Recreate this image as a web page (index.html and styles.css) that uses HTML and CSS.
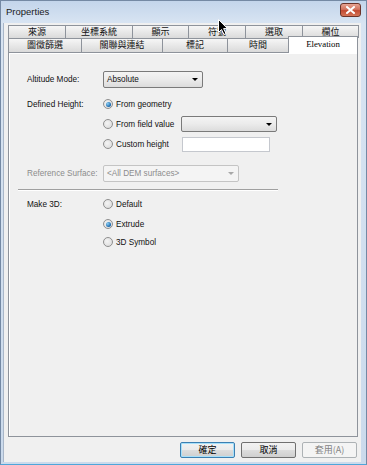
FILE: index.html
```html
<!DOCTYPE html>
<html lang="zh-Hant">
<head>
    <meta charset="UTF-8">
    <title>Properties</title>
    <link rel="stylesheet" href="styles.css">
</head>
<body>

<div class="window">
    <!-- Titelleiste -->
    <div class="titlebar">
        <span class="title">Properties</span>
        <span class="close">
            <svg width="9" height="8" viewBox="0 0 9 8"><path d="M1 1 L8 7 M8 1 L1 7" stroke="#fff" stroke-width="2" stroke-linecap="square"/></svg>
        </span>
    </div>

    <div class="client">
        <!-- Registerkarten -->
        <div class="tabrow back">
            <div class="tab w57">來源</div>
            <div class="tab w67">坐標系統</div>
            <div class="tab w56">顯示</div>
            <div class="tab w57">符號</div>
            <div class="tab w57">選取</div>
            <div class="tab w56">欄位</div>
        </div>
        <div class="tabrow front">
            <div class="tab w73">圖徵篩選</div>
            <div class="tab w81">關聯與連結</div>
            <div class="tab w65">標記</div>
            <div class="tab w61">時間</div>
            <div class="tab w70 active">Elevation</div>
        </div>

        <div class="panel">
            <div class="row r-alt">
                <span class="lbl">Altitude Mode:</span>
                <div class="combo c-alt">Absolute<span class="arrow"></span></div>
            </div>

            <div class="row r-opt first">
                <span class="lbl">Defined Height:</span>
                <span class="radio checked"></span>From geometry
            </div>
            <div class="row r-opt">
                <span class="lbl"></span>
                <span class="opt-w"><span class="radio"></span>From field value</span>
                <div class="combo c-field"><span class="arrow"></span></div>
            </div>
            <div class="row r-opt">
                <span class="lbl"></span>
                <span class="opt-w"><span class="radio"></span>Custom height</span>
                <div class="textbox"></div>
            </div>

            <div class="row r-ref disabled">
                <span class="lbl">Reference Surface:</span>
                <div class="combo c-ref">&lt;All DEM surfaces&gt;<span class="arrow"></span></div>
            </div>

            <div class="sep"></div>

            <div class="row r-opt r-3d">
                <span class="lbl">Make 3D:</span>
                <span class="radio"></span>Default
            </div>
            <div class="row r-opt">
                <span class="lbl"></span>
                <span class="radio checked"></span>Extrude
            </div>
            <div class="row r-opt last">
                <span class="lbl"></span>
                <span class="radio"></span>3D Symbol
            </div>
        </div>

        <!-- Schaltflächen -->
        <div class="buttons">
            <button class="btn default">確定</button>
            <button class="btn">取消</button>
            <button class="btn" disabled>套用(A)</button>
        </div>
    </div>

    <!-- Mauszeiger -->
    <svg class="cursor" width="11" height="17" viewBox="0 0 11 17">
        <path d="M0.5 0.5 L0.5 13.5 L3.5 10.5 L6 15.5 L8 14.5 L5.6 9.6 L9.5 9.6 Z" fill="#000" stroke="#fff" stroke-width="1"/>
    </svg>
</div>

</body>
</html>
```

FILE: styles.css
```css
/* Grundlayout */
body {
    margin: 0;
    font-family: 'Liberation Sans', Arial, sans-serif;
    font-size: 8.2px;
    color: #111;
}

.window {
    position: relative;
    width: 367px;
    height: 465px;
    box-sizing: border-box;
    display: flex;
    flex-direction: column;
    background: linear-gradient(#c3d5eb, #d8e4f2 22px, #cbdaec);
    border: 1px solid #7489a4;
    border-bottom-color: #4ea6da;
}

.titlebar {
    height: 22px;
    display: flex;
    align-items: center;
    justify-content: space-between;
    padding: 0 5px 2px 5px;
    box-sizing: border-box;
}

.title {
    font-size: 9.5px;
    color: #1b1b1b;
}

.close {
    width: 21px;
    height: 14px;
    box-sizing: border-box;
    border: 1px solid #6b3329;
    border-radius: 3px;
    background: linear-gradient(#e6a493, #d2735e 45%, #c24a32 55%, #d57558);
    display: flex;
    align-items: center;
    justify-content: center;
    margin-bottom: 2px;
}

.client {
    flex: 1;
    margin: 0 5px 2px 2px;
    background: #f0f0f0;
    border-left: 1px solid #a8b6c8;
    padding: 2px 3px 4px 4px;
    display: flex;
    flex-direction: column;
}

/* Registerkarten */
.tabrow {
    display: flex;
}

.tabrow.back {
    height: 13px;
}

.tabrow.front {
    height: 14px;
}

.tab {
    box-sizing: border-box;
    border: 1px solid #8e939b;
    border-bottom: none;
    margin-right: -1px;
    background: linear-gradient(#f6f6f6, #e8e8e8 50%, #dadada);
    font-family: 'Noto Sans CJK TC', 'Noto Sans CJK SC', sans-serif;
    font-size: 9px;
    line-height: 12px;
    text-align: center;
    color: #111;
}

.w56 { width: 57px; }
.w57 { width: 58px; }
.w61 { width: 62px; }
.w65 { width: 66px; }
.w67 { width: 68px; }
.w70 { width: 70px; }
.w73 { width: 74px; }
.w81 { width: 82px; }

.tab.active {
    position: relative;
    z-index: 1;
    margin-top: -2px;
    height: 17px;
    background: #fff;
    font-family: 'Liberation Serif', 'Times New Roman', serif;
    font-size: 8.8px;
    line-height: 14px;
    color: #000;
}

.panel {
    flex: 1;
    border: 1px solid #8e939b;
    box-shadow: inset 1px 1px 0 #fff;
    padding: 17px 0 0 18px;
}

/* Zeilen */
.row {
    display: flex;
    align-items: center;
}

.lbl {
    width: 76px;
    flex: none;
}

.r-alt {
    height: 18px;
}

.r-opt {
    height: 20px;
}

.r-opt.first {
    margin-top: 6px;
}

.r-opt.last {
    height: 16px;
}

.r-ref {
    height: 18px;
    margin-top: 10px;
}

.r-3d {
    margin-top: 3px;
}

.disabled {
    color: #8c8c8c;
}

.opt-w {
    width: 78px;
    display: flex;
    align-items: center;
}

/* Optionsfelder */
.radio {
    width: 10px;
    height: 10px;
    box-sizing: border-box;
    border-radius: 50%;
    border: 1px solid #8f8f8f;
    background: radial-gradient(circle at 40% 40%, #f4f4f4, #d8d8d8);
    margin-right: 3px;
    display: flex;
    align-items: center;
    justify-content: center;
}

.radio.checked::after {
    content: '';
    width: 5px;
    height: 5px;
    border-radius: 50%;
    background: radial-gradient(circle at 35% 35%, #8ed0f5, #1766ab 70%);
}

/* Auswahllisten */
.combo {
    position: relative;
    height: 17px;
    box-sizing: border-box;
    border: 1px solid #7a7a7a;
    border-radius: 2px;
    background: linear-gradient(#f4f4f4, #ebebeb 50%, #dcdcdc);
    padding-left: 3px;
    line-height: 15px;
}

.c-alt {
    width: 100px;
}

.c-field {
    width: 96px;
    height: 16px;
}

.c-ref {
    width: 136px;
    border-color: #c4c4c4;
    background: #f4f4f4;
    color: #8c8c8c;
}

.arrow {
    position: absolute;
    right: 4px;
    top: 6px;
    border-left: 3px solid transparent;
    border-right: 3px solid transparent;
    border-top: 3px solid #000;
}

.c-ref .arrow {
    border-top-color: #a8a8a8;
}

.textbox {
    width: 88px;
    height: 15px;
    box-sizing: border-box;
    border: 1px solid #c5c8ce;
    background: #fff;
    margin-left: 1px;
}

.sep {
    width: 260px;
    margin: 7px 0 0 -9px;
    border-top: 1px solid #a0a0a0;
    border-bottom: 1px solid #fff;
}

/* Schaltflächen */
.buttons {
    display: flex;
    justify-content: flex-end;
    gap: 6px;
    margin-top: 5px;
    padding-right: 1px;
}

.btn {
    width: 55px;
    height: 16px;
    box-sizing: border-box;
    border: 1px solid #707070;
    border-radius: 2px;
    background: linear-gradient(#f2f2f2, #ebebeb 50%, #dddddd 51%, #cfcfcf);
    font-family: 'Noto Sans CJK TC', 'Noto Sans CJK SC', sans-serif;
    font-size: 9px;
    line-height: 12px;
    padding: 0;
    color: #000;
}

.btn.default {
    border-color: #3c7fb1;
    box-shadow: inset 0 0 0 1px #a6e0fa;
}

.btn:disabled {
    border-color: #adb2b5;
    background: #f4f4f4;
    color: #838383;
}

.cursor {
    position: absolute;
    left: 217px;
    top: 18px;
}
```
